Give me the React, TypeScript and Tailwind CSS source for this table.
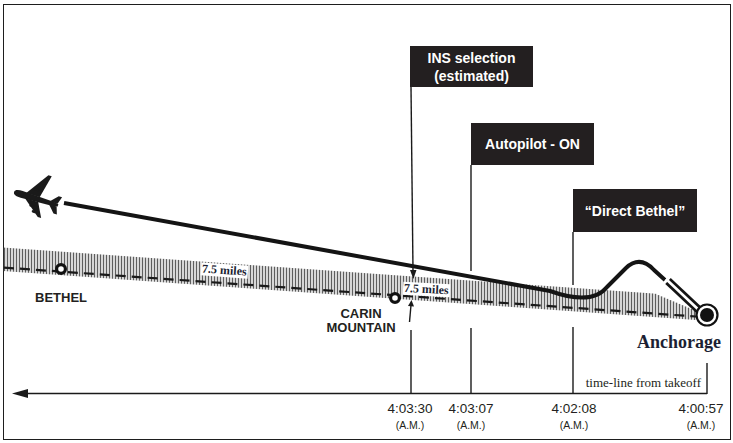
import React from "react"

const yDash = (x: number) => 267.3 + 0.0707 * x

function hatchTop(x: number) {
  const base = yDash(x) - 20
  return x > 655 ? base + (x - 655) * 0.35 : base
}

function Airway() {
  const xs: number[] = []
  for (let x = 4.5; x <= 697; x += 3) xs.push(x)
  return (
    <g>
      {xs.map((x) => (
        <line
          key={x}
          x1={x}
          x2={x}
          y1={hatchTop(x)}
          y2={yDash(x) + 3.5}
          stroke="#5e5e5e"
          strokeWidth={1.5}
        />
      ))}
      <line
        x1={4}
        y1={yDash(4)}
        x2={696}
        y2={yDash(696)}
        stroke="#1a1a1a"
        strokeWidth={2.2}
        strokeDasharray="10 6"
      />
    </g>
  )
}

function Plane() {
  return (
    <g transform="translate(37 199) rotate(17)" fill="#1a1a1a">
      <path d="M-24 0 C-24 -3 -20 -3.6 -16 -3.6 L18 -2.2 L22 -1.2 L22 1.2 L18 2.2 L-16 3.6 C-20 3.6 -24 3 -24 0 Z" />
      <path d="M-12 -2.5 L4 -26 L7.5 -26 L2 -2.5 Z" />
      <path d="M-12 2.5 L6 17 L9.5 17 L2 2.5 Z" />
      <path d="M13 -1.5 L20 -9 L23.5 -9 L21 -1.5 Z" />
      <path d="M13 1.5 L20 9 L23.5 9 L21 1.5 Z" />
      <ellipse cx={-3} cy={-9} rx={2.6} ry={1.4} />
      <ellipse cx={1} cy={-17} rx={2.6} ry={1.4} />
      <ellipse cx={-3} cy={8} rx={2.6} ry={1.4} />
      <ellipse cx={1} cy={13} rx={2.6} ry={1.4} />
    </g>
  )
}

function Diagram() {
  return (
    <svg className="absolute inset-0" width={733} height={443} viewBox="0 0 733 443">
      <Airway />

      {/* waypoints */}
      <circle cx={61} cy={269} r={4.4} fill="#fff" stroke="#111" strokeWidth={3.2} />
      <circle cx={395} cy={298} r={4.4} fill="#fff" stroke="#111" strokeWidth={3.2} />

      {/* flight path */}
      <path
        d="M64 203 L550 291 Q592 306 607 287 L626 268 Q640 255 654 270 L665 280"
        fill="none"
        stroke="#141414"
        strokeWidth={4}
        strokeLinejoin="round"
      />
      <line x1={668} y1={281} x2={700} y2={311} stroke="#141414" strokeWidth={8} />
      <line x1={666} y1={279} x2={702} y2={313} stroke="#fff" strokeWidth={2.6} />

      {/* Anchorage */}
      <circle cx={707} cy={315} r={10.5} fill="#fff" stroke="#111" strokeWidth={2.2} />
      <circle cx={707} cy={315} r={7} fill="#111" />

      <Plane />

      {/* event markers */}
      <g stroke="#1a1a1a" strokeWidth={1.4} fill="none">
        <line x1={411} y1={87} x2={413} y2={271} />
        <line x1={409.5} y1={322} x2={411} y2={305} />
        <line x1={411} y1={330} x2={411} y2={394} />
        <line x1={471} y1={165} x2={471} y2={271} />
        <line x1={471} y1={328} x2={471} y2={394} />
        <line x1={573} y1={232} x2={573} y2={285} />
        <line x1={573} y1={327} x2={573} y2={394} />
        <line x1={707} y1={363} x2={707} y2={394} />
        <line x1={26} y1={393.5} x2={707} y2={393.5} />
      </g>
      <g fill="#1a1a1a">
        <polygon points="410,270 416.5,270 413.4,279" />
        <polygon points="408,306 414,306.4 411.5,300" />
        <polygon points="12,393.5 28,389 28,398" />
      </g>
    </svg>
  )
}

const sans = "font-['Liberation_Sans',Arial,sans-serif]"
const serif = "font-['Liberation_Serif','Times_New_Roman',serif]"

function EventBox({ className, children }: { className: string; children: React.ReactNode }) {
  return (
    <div
      className={`absolute flex flex-col items-center justify-center bg-[#231f20] text-center text-[14px] font-bold leading-[18px] text-white ${sans} ${className}`}
    >
      {children}
    </div>
  )
}

function TimeLabel({ left, time }: { left: string; time: string }) {
  return (
    <div className={`absolute top-[401.5px] w-[60px] text-center text-[#231f20] ${sans} ${left}`}>
      <div className="text-[13.5px] leading-none">{time}</div>
      <div className="mt-[5px] text-[10.5px] leading-none">(A.M.)</div>
    </div>
  )
}

export default function App() {
  return (
    <div className="relative h-[443px] w-[733px] bg-white pl-[3px] pt-[4px]">
      <div className="h-[436px] w-[728px] border-[1.5px] border-[#1e1e1e]" />

      <Diagram />

      <EventBox className="left-[410px] top-[46px] h-[41px] w-[123px]">
        <span>INS selection</span>
        <span>(estimated)</span>
      </EventBox>
      <EventBox className="left-[471px] top-[123px] h-[42px] w-[123px]">
        <span>Autopilot - ON</span>
      </EventBox>
      <EventBox className="left-[573px] top-[189px] h-[43px] w-[124px]">
        <span>“Direct Bethel”</span>
      </EventBox>

      <div className={`absolute left-[35px] top-[291px] text-[13px] font-bold leading-none text-[#231f20] ${sans}`}>
        BETHEL
      </div>
      <div
        className={`absolute left-[321px] top-[306.5px] w-[80px] text-center text-[13px] font-bold leading-[14px] text-[#231f20] ${sans}`}
      >
        CARIN
        <br />
        MOUNTAIN
      </div>

      <div
        className={`absolute left-[201px] top-[264px] rotate-[4deg] bg-white px-[1px] text-[12px] font-bold leading-[13px] text-[#1c1f33] ${serif}`}
      >
        7.5 miles
      </div>
      <div
        className={`absolute left-[403px] top-[283px] rotate-[3deg] bg-white px-[1px] text-[12px] font-bold leading-[13px] text-[#1c1f33] ${serif}`}
      >
        7.5 miles
      </div>

      <div className={`absolute left-[637px] top-[333px] text-[18px] font-bold leading-none text-[#1c1f33] ${serif}`}>
        Anchorage
      </div>

      <div className={`absolute right-[32px] top-[376px] text-[13px] leading-none text-[#231f20] ${serif}`}>
        time-line from takeoff
      </div>

      <TimeLabel left="left-[380px]" time="4:03:30" />
      <TimeLabel left="left-[441px]" time="4:03:07" />
      <TimeLabel left="left-[544px]" time="4:02:08" />
      <TimeLabel left="left-[671px]" time="4:00:57" />
    </div>
  )
}
